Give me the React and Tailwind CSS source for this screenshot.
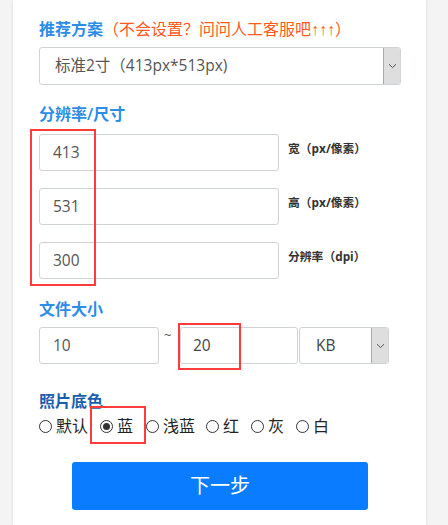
import React from "react";

const font = { fontFamily: '"Open Sans", "Noto Sans CJK SC", sans-serif' };

function Chevron() {
  return (
    <svg width="9" height="6" viewBox="0 0 9 6" className="block">
      <path d="M1 1.2 L4.5 4.6 L8 1.2" fill="none" stroke="#555" strokeWidth="1" />
    </svg>
  );
}

function Radio({ checked, label, className = "" }) {
  return (
    <div className={"flex items-center " + className}>
      <span className="flex h-[13px] w-[13px] items-center justify-center rounded-full border border-[#333] bg-white">
        {checked && <span className="h-[7px] w-[7px] rounded-full bg-[#333]" />}
      </span>
      <span className="ml-[4px] text-[16px] leading-none text-[#222]">{label}</span>
    </div>
  );
}

export default function App() {
  return (
    <div className="min-h-[525px] w-[448px] bg-[#f4f4f4] overflow-hidden" style={font}>
      <div className="ml-[13px] w-[413px] min-h-[525px] bg-white shadow-[0_0_3px_rgba(0,0,0,0.12)] pl-[26px] pt-[19px]">
        <div className="flex items-center h-[20px] text-[16px] leading-none">
          <span className="font-semibold text-[#2d8de6]">推荐方案</span>
          <span className="text-[#ff5a1e]">
            （不会设置？问问人工客服吧
            <span style={{ fontFamily: '"Liberation Sans", sans-serif' }}>↑↑↑</span>）
          </span>
        </div>
        <div className="mt-[8px] flex h-[38px] w-[362px] items-stretch rounded-[3px] border border-[#cfd3d8]">
          <div className="flex flex-1 items-center pl-[15px] text-[15.5px] text-[#555]">标准2寸（413px*513px)</div>
          <div className="flex w-[17px] items-center justify-center border-l border-[#aaa] bg-[#dedede] rounded-r-[2px]">
            <Chevron />
          </div>
        </div>

        <div className="mt-[19px] h-[20px] text-[16px] leading-none font-semibold text-[#2d8de6] flex items-center">分辨率/尺寸</div>

        <div className="relative mt-[10px] flex flex-col gap-[17px]">
          <div className="pointer-events-none absolute left-[-9px] top-[-5px] h-[157px] w-[66px] border-2 border-[#ff3b3b]" />
          {[
            ["413", "宽（px/像素）"],
            ["531", "高（px/像素）"],
            ["300", "分辨率（dpi）"],
          ].map(([v, l]) => (
            <div key={l} className="flex items-start">
              <div className="flex h-[37px] w-[240px] items-center rounded-[3px] border border-[#cfd3d8] pl-[13px] text-[15.5px] text-[#555]">
                {v}
              </div>
              <div className="ml-[9px] pt-[9px] text-[11.8px] font-bold leading-none text-[#333]">{l}</div>
            </div>
          ))}
        </div>

        <div className="mt-[20px] h-[20px] text-[16px] leading-none font-semibold text-[#2d8de6] flex items-center">文件大小</div>

        <div className="mt-[8px] flex items-start">
          <div className="flex h-[37px] w-[120px] items-center rounded-[3px] border border-[#cfd3d8] pl-[13px] text-[15.5px] text-[#555]">10</div>
          <div className="w-[21px] pl-[5px] pt-[2px] text-[13px] leading-none text-[#555]">~</div>
          <div className="relative flex h-[37px] w-[118px] items-center rounded-[3px] border border-[#cfd3d8] pl-[12px] text-[15.5px] text-[#444]">
            20
            <div className="pointer-events-none absolute left-[-3px] top-[-5px] h-[47px] w-[63px] border-2 border-[#ff3b3b]" />
          </div>
          <div className="ml-[1px] flex h-[37px] w-[90px] items-stretch rounded-[3px] border border-[#cfd3d8]">
            <div className="flex flex-1 items-center pl-[16px] text-[15.5px] text-[#444]">KB</div>
            <div className="flex w-[17px] items-center justify-center border-l border-[#aaa] bg-[#dedede] rounded-r-[2px]">
              <Chevron />
            </div>
          </div>
        </div>

        <div className="mt-[27px] h-[20px] text-[16px] leading-none font-semibold text-[#1a5fae] flex items-center">照片底色</div>

        <div className="relative mt-[6px] flex items-center h-[18px]">
          <div className="pointer-events-none absolute left-[51px] top-[-11px] h-[38px] w-[56px] border-2 border-[#ff3b3b]" />
          <Radio label="默认" />
          <Radio label="蓝" checked className="ml-[12px]" />
          <Radio label="浅蓝" className="ml-[13px]" />
          <Radio label="红" className="ml-[11px]" />
          <Radio label="灰" className="ml-[12px]" />
          <Radio label="白" className="ml-[12px]" />
        </div>

        <div className="mt-[27px] ml-[33px] flex h-[48px] w-[296px] items-center justify-center rounded-[3px] bg-[#0a7cff] text-[20px] text-white">
          下一步
        </div>
      </div>
    </div>
  );
}
